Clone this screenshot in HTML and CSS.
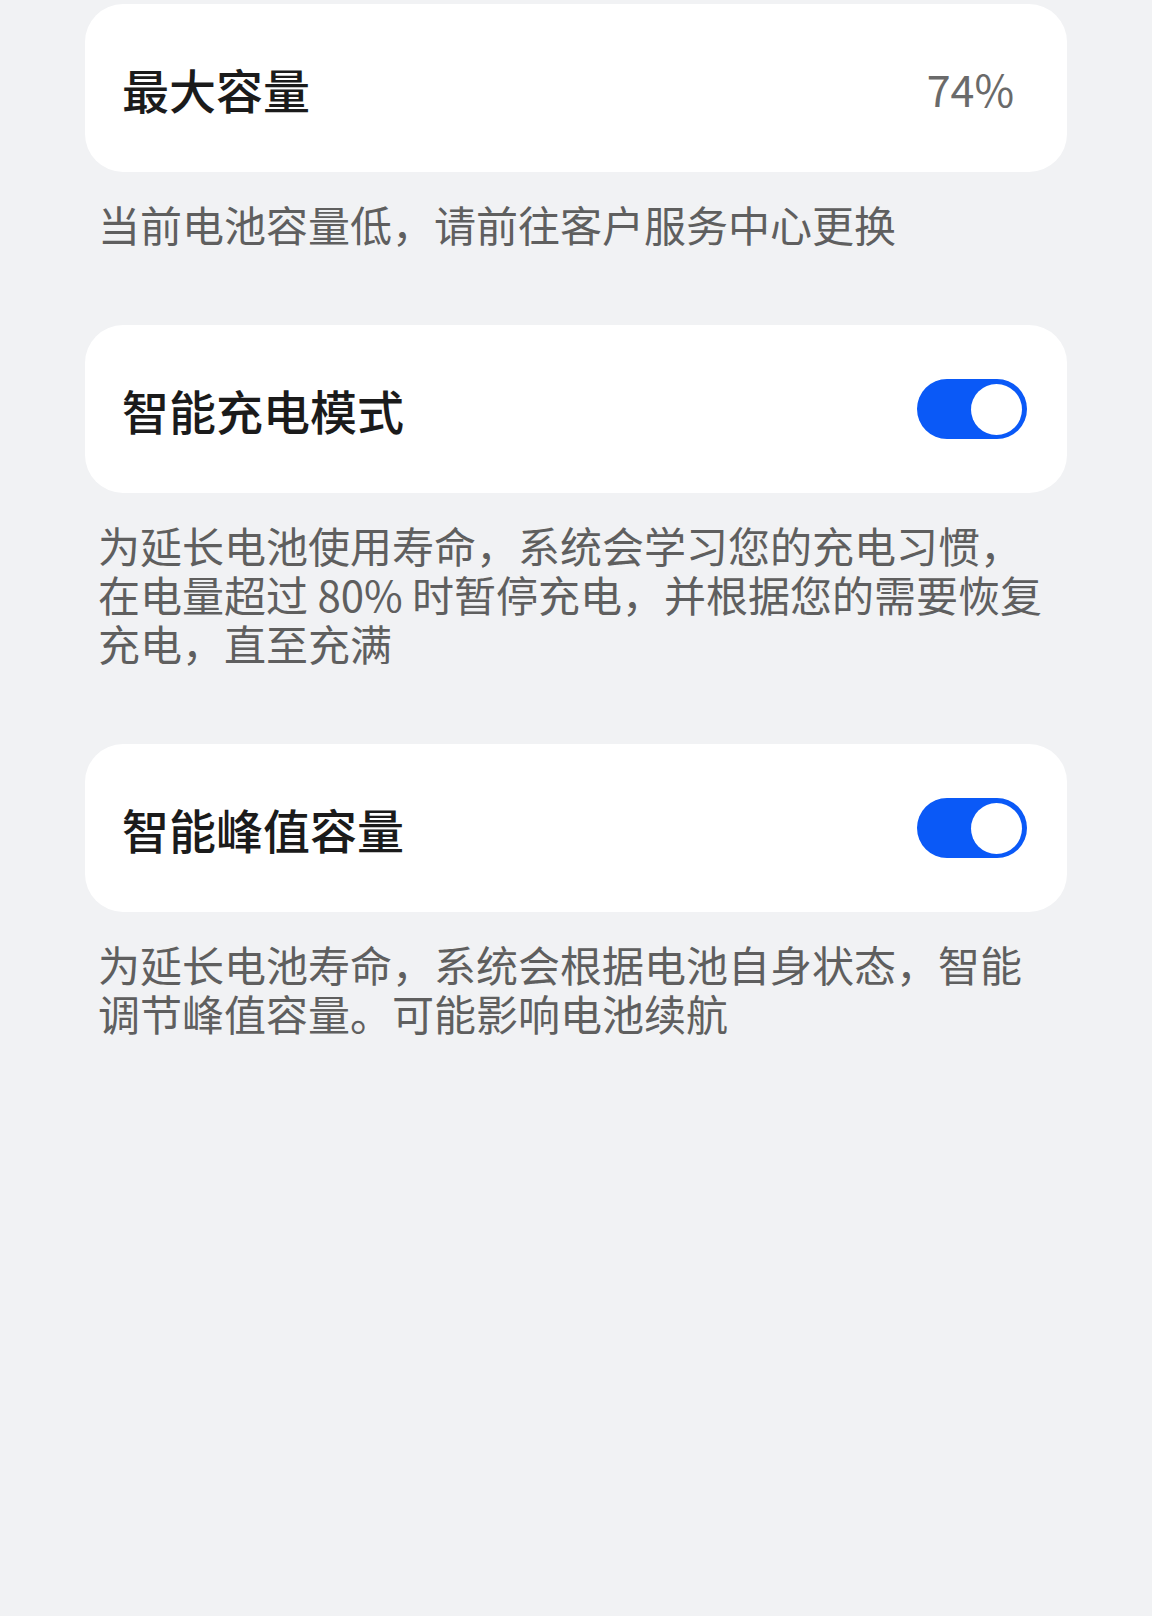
FILE: index.html
```html
<!DOCTYPE html>
<html>
	<head>
		<meta charset="UTF-8">
		<title>电池健康</title>
		<link rel="stylesheet" href="styles.css">
	</head>
	<body>
		<div class="page">
			<div class="card">
				<span class="title">最大容量</span>
				<span class="value">74%</span>
			</div>
			<p class="note">当前电池容量低，请前往客户服务中心更换</p>

			<div class="card">
				<span class="title">智能充电模式</span>
				<a href="javascript:" class="switch on"><i></i></a>
			</div>
			<p class="note">为延长电池使用寿命，系统会学习您的充电习惯，<br>在电量超过 80% 时暂停充电，并根据您的需要恢复<br>充电，直至充满</p>

			<div class="card">
				<span class="title">智能峰值容量</span>
				<a href="javascript:" class="switch on"><i></i></a>
			</div>
			<p class="note">为延长电池寿命，系统会根据电池自身状态，智能<br>调节峰值容量。可能影响电池续航</p>
		</div>
	</body>
</html>
```

FILE: styles.css
```css
body{margin: 0; background: #f1f2f4; font-family: "Noto Sans CJK SC", "Noto Sans", sans-serif;}
a{text-decoration: none;}
.page{padding: 4px 85px 0;}
.card{height: 168px; box-sizing: border-box; padding: 0 40px 0 37px; background: #fff; border-radius: 38px; display: flex; align-items: center; justify-content: space-between;}
.title{font-size: 47px; font-weight: 500; color: #1b1b1b;}
.value{font-size: 43px; color: #6a6a6a; margin-right: 13px;}
.note{margin: 0 0 77px; padding: 27px 13px 0; font-size: 42px; line-height: 49px; color: #5f5f5f;}
.switch{display: flex; align-items: center; justify-content: flex-end; width: 110px; height: 60px; box-sizing: border-box; padding: 0 5px; border-radius: 30px; background: #0a59f7;}
.switch i{width: 51px; height: 51px; border-radius: 50%; background: #fff;}
```
